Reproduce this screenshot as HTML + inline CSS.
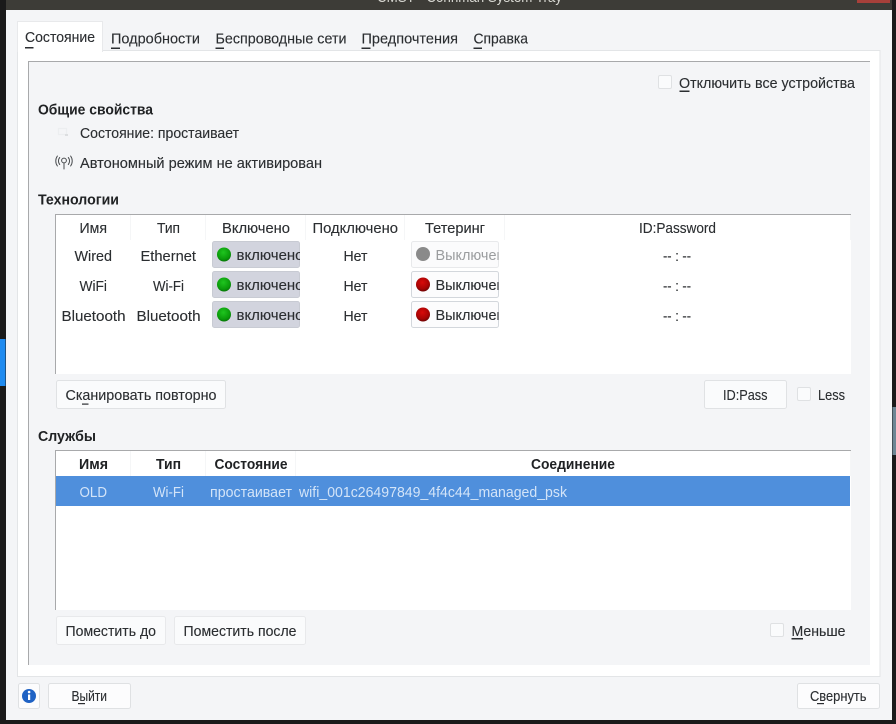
<!DOCTYPE html>
<html lang="ru"><head><meta charset="utf-8"><title>CMST</title>
<style>
html,body{margin:0;padding:0;width:896px;height:724px;overflow:hidden;background:#1c1c1c}
svg{display:block}
text{font-family:"Liberation Sans","DejaVu Sans",sans-serif;font-size:14.5px;fill:#2b2e31;stroke:#2b2e31;stroke-width:.12px}
.b{font-weight:bold;fill:#202224;stroke:none}
.w{fill:#d3e4f8;stroke:none}
.g{fill:#9a9c9e;stroke:none}
.t{fill:#d8d8d2;stroke:none}
</style></head><body>
<svg width="896" height="724" viewBox="0 0 896 724" xmlns="http://www.w3.org/2000/svg">
<defs>
<radialGradient id="gr" cx=".45" cy=".35" r=".7"><stop offset="0" stop-color="#1fc51f"/><stop offset=".7" stop-color="#0a9a0a"/><stop offset="1" stop-color="#056a05"/></radialGradient>
<radialGradient id="rd" cx=".45" cy=".35" r=".7"><stop offset="0" stop-color="#d80a0a"/><stop offset=".65" stop-color="#a80404"/><stop offset="1" stop-color="#600303"/></radialGradient>
<clipPath id="c1"><rect x="212" y="240" width="88" height="90"/></clipPath>
<clipPath id="c2"><rect x="411" y="240" width="87.5" height="90"/></clipPath>
</defs>

<rect width="896" height="724" fill="#1a1a1a"/>
<rect x="0" y="339" width="5.5" height="47" fill="#1f8bf0"/>
<rect x="892.5" y="407" width="3.5" height="48" fill="#6d8694"/>
<rect x="6" y="0" width="886" height="10" fill="#3d3c37"/>
<text class="t" x="377" y="2" textLength="185" lengthAdjust="spacingAndGlyphs">CMST - Connman System Tray</text>
<rect x="857" y="0" width="33" height="3" fill="#a8403a"/>
<rect x="6" y="10" width="886" height="710" fill="#f4f5f7"/>

<!-- tab pane -->
<rect x="17.5" y="50.5" width="862.5" height="626" fill="#fff" stroke="#e3e5e7"/>
<rect x="17.5" y="21.5" width="85" height="30" fill="#fff" stroke="#e8e9eb"/>
<rect x="18" y="49" width="84" height="3" fill="#fff"/>
<!-- inner panel -->
<rect x="28" y="61" width="842" height="604" fill="#f4f5f7"/>
<rect x="28" y="61" width="842" height="1" fill="#a8a9ab"/>
<rect x="28" y="61" width="1" height="604" fill="#a8a9ab"/>

<!-- tabs -->
<text x="25" y="42" textLength="70" lengthAdjust="spacingAndGlyphs">Состояние</text>
<rect x="25" y="47" width="8.5" height="1.5" fill="#2b2e31"/>
<text x="111" y="43.5" textLength="89" lengthAdjust="spacingAndGlyphs">Подробности</text>
<rect x="111" y="47.5" width="9" height="1.5" fill="#2b2e31"/>
<text x="215.5" y="43.5" textLength="131" lengthAdjust="spacingAndGlyphs">Беспроводные сети</text>
<rect x="215.5" y="47.5" width="8.5" height="1.5" fill="#2b2e31"/>
<text x="361.5" y="43.5" textLength="96.5" lengthAdjust="spacingAndGlyphs">Предпочтения</text>
<rect x="361.5" y="47.5" width="9" height="1.5" fill="#2b2e31"/>
<text x="473.5" y="43.5" textLength="54.5" lengthAdjust="spacingAndGlyphs">Справка</text>
<rect x="473.5" y="47.5" width="8.5" height="1.5" fill="#2b2e31"/>

<!-- top checkbox -->
<rect x="658.5" y="75.5" width="13" height="13" rx="1.5" fill="#fafbfc" stroke="#dfe1e3"/>
<text x="679" y="88" textLength="176" lengthAdjust="spacingAndGlyphs">Отключить все устройства</text>
<rect x="679.5" y="90.5" width="10" height="1.5" fill="#2b2e31"/>

<!-- general -->
<text class="b" x="38" y="114.5" textLength="115" lengthAdjust="spacingAndGlyphs">Общие свойства</text>
<g fill="none" stroke="#eceef0" stroke-width="1.2"><rect x="58.5" y="128.5" width="8" height="6"/></g>
<rect x="65" y="134" width="3" height="2" fill="#dcdee0"/>
<text x="80" y="138" textLength="159" lengthAdjust="spacingAndGlyphs">Состояние: простаивает</text>
<g fill="none" stroke="#4a4d50" stroke-width="1" stroke-linecap="round">
<circle cx="64" cy="160.5" r="2.4"/>
<path d="M64 163V169"/>
<path d="M59.7 157.5A5.5 5.5 0 0 0 59.7 164.5"/>
<path d="M68.3 157.5A5.5 5.5 0 0 1 68.3 164.5"/>
<path d="M57.4 156A8.5 8.5 0 0 0 57.4 166"/>
<path d="M70.6 156A8.5 8.5 0 0 1 70.6 166"/>
</g>
<text x="80" y="168" textLength="242" lengthAdjust="spacingAndGlyphs">Автономный режим не активирован</text>

<!-- technologies -->
<text class="b" x="38" y="204.5" textLength="81" lengthAdjust="spacingAndGlyphs">Технологии</text>
<rect x="55" y="214" width="796" height="160" fill="#fff"/>
<rect x="55" y="214" width="796" height="1" fill="#a8a9ab"/>
<rect x="55" y="214" width="1" height="160" fill="#a8a9ab"/>
<g fill="#f5f6f7"><rect x="130" y="215" width="1" height="25"/><rect x="205" y="215" width="1" height="25"/><rect x="305" y="215" width="1" height="25"/><rect x="404" y="215" width="1" height="25"/><rect x="504" y="215" width="1" height="25"/><rect x="850" y="215" width="1" height="25"/></g>
<text x="79.5" y="233" textLength="27.5" lengthAdjust="spacingAndGlyphs">Имя</text>
<text x="157" y="233" textLength="23" lengthAdjust="spacingAndGlyphs">Тип</text>
<text x="222" y="233" textLength="68" lengthAdjust="spacingAndGlyphs">Включено</text>
<text x="312.5" y="233" textLength="85.5" lengthAdjust="spacingAndGlyphs">Подключено</text>
<text x="425" y="233" textLength="60" lengthAdjust="spacingAndGlyphs">Тетеринг</text>
<text x="639" y="233" textLength="77" lengthAdjust="spacingAndGlyphs">ID:Password</text>

<text x="74.5" y="261" textLength="37.5" lengthAdjust="spacingAndGlyphs">Wired</text>
<text x="140.5" y="261" textLength="55.5" lengthAdjust="spacingAndGlyphs">Ethernet</text>
<text x="79.5" y="291" textLength="27.5" lengthAdjust="spacingAndGlyphs">WiFi</text>
<text x="153" y="291" textLength="31" lengthAdjust="spacingAndGlyphs">Wi-Fi</text>
<text x="61.5" y="321" textLength="64" lengthAdjust="spacingAndGlyphs">Bluetooth</text>
<text x="136.5" y="321" textLength="64" lengthAdjust="spacingAndGlyphs">Bluetooth</text>

<g fill="#d2d4de" stroke="#c8cbd3">
<rect x="212.5" y="241.5" width="87" height="26" rx="2"/>
<rect x="212.5" y="271.5" width="87" height="26" rx="2"/>
<rect x="212.5" y="301.5" width="87" height="26" rx="2"/>
</g>
<circle cx="224" cy="254.5" r="7" fill="url(#gr)"/>
<circle cx="224" cy="284.5" r="7" fill="url(#gr)"/>
<circle cx="224" cy="314.5" r="7" fill="url(#gr)"/>
<g clip-path="url(#c1)">
<text x="236.5" y="260" textLength="67" lengthAdjust="spacingAndGlyphs">включено</text>
<text x="236.5" y="290" textLength="67" lengthAdjust="spacingAndGlyphs">включено</text>
<text x="236.5" y="320" textLength="67" lengthAdjust="spacingAndGlyphs">включено</text>
</g>

<text x="343.5" y="261" textLength="24" lengthAdjust="spacingAndGlyphs">Нет</text>
<text x="343.5" y="291" textLength="24" lengthAdjust="spacingAndGlyphs">Нет</text>
<text x="343.5" y="321" textLength="24" lengthAdjust="spacingAndGlyphs">Нет</text>

<rect x="411.5" y="241.5" width="87" height="26" rx="2" fill="#fbfbfc" stroke="#e8e9eb"/>
<rect x="411.5" y="271.5" width="87" height="26" rx="2" fill="#fcfcfd" stroke="#d3d7dc"/>
<rect x="411.5" y="301.5" width="87" height="26" rx="2" fill="#fcfcfd" stroke="#d3d7dc"/>
<circle cx="423" cy="254" r="7" fill="#8a8a8a"/>
<circle cx="423" cy="284.5" r="7" fill="url(#rd)"/>
<circle cx="423" cy="314.5" r="7" fill="url(#rd)"/>
<g clip-path="url(#c2)">
<text class="g" x="435.5" y="260" textLength="77" lengthAdjust="spacingAndGlyphs">Выключено</text>
<text x="435.5" y="290" textLength="77" lengthAdjust="spacingAndGlyphs">Выключено</text>
<text x="435.5" y="320" textLength="77" lengthAdjust="spacingAndGlyphs">Выключено</text>
</g>

<text x="663" y="261" textLength="28" lengthAdjust="spacingAndGlyphs">-- : --</text>
<text x="663" y="291" textLength="28" lengthAdjust="spacingAndGlyphs">-- : --</text>
<text x="663" y="321" textLength="28" lengthAdjust="spacingAndGlyphs">-- : --</text>

<!-- tech buttons -->
<rect x="56.5" y="380.5" width="169" height="28" rx="2" fill="#fafbfc" stroke="#e0e2e4"/>
<text x="65.5" y="400" textLength="151" lengthAdjust="spacingAndGlyphs">Сканировать повторно</text>
<rect x="82" y="403.5" width="6.5" height="1.2" fill="#2b2e31"/>
<rect x="704.5" y="380.5" width="82" height="28" rx="2" fill="#fafbfc" stroke="#e0e2e4"/>
<text x="723" y="400" textLength="44.5" lengthAdjust="spacingAndGlyphs">ID:Pass</text>
<rect x="797.5" y="387.5" width="13" height="13" rx="1.5" fill="#fafbfc" stroke="#dfe1e3"/>
<text x="818" y="400" textLength="27" lengthAdjust="spacingAndGlyphs">Less</text>

<!-- services -->
<text class="b" x="38" y="441" textLength="58" lengthAdjust="spacingAndGlyphs">Службы</text>
<rect x="55" y="450" width="796" height="160" fill="#fff"/>
<rect x="55" y="450" width="796" height="1" fill="#a8a9ab"/>
<rect x="55" y="450" width="1" height="160" fill="#a8a9ab"/>
<g fill="#f5f6f7"><rect x="130" y="451" width="1" height="25"/><rect x="205" y="451" width="1" height="25"/><rect x="295" y="451" width="1" height="25"/><rect x="850" y="451" width="1" height="25"/></g>
<text class="b" x="79" y="469" textLength="29" lengthAdjust="spacingAndGlyphs">Имя</text>
<text class="b" x="156" y="469" textLength="25" lengthAdjust="spacingAndGlyphs">Тип</text>
<text class="b" x="214.5" y="469" textLength="73" lengthAdjust="spacingAndGlyphs">Состояние</text>
<text class="b" x="531" y="469" textLength="84" lengthAdjust="spacingAndGlyphs">Соединение</text>
<rect x="56" y="476" width="794" height="30" fill="#4f8fdc"/>
<text class="w" x="79.5" y="497" textLength="27.5" lengthAdjust="spacingAndGlyphs">OLD</text>
<text class="w" x="153" y="497" textLength="31" lengthAdjust="spacingAndGlyphs">Wi-Fi</text>
<text class="w" x="210" y="497" textLength="82" lengthAdjust="spacingAndGlyphs">простаивает</text>
<text class="w" x="299" y="497" textLength="268" lengthAdjust="spacingAndGlyphs">wifi_001c26497849_4f4c44_managed_psk</text>

<!-- service buttons -->
<rect x="56.5" y="616.5" width="109" height="28" rx="2" fill="#fafbfc" stroke="#e8e9eb"/>
<text x="65.5" y="636" textLength="90.5" lengthAdjust="spacingAndGlyphs">Поместить до</text>
<rect x="174.5" y="616.5" width="131" height="28" rx="2" fill="#fafbfc" stroke="#e8e9eb"/>
<text x="183.5" y="636" textLength="113" lengthAdjust="spacingAndGlyphs">Поместить после</text>
<rect x="770.5" y="623.5" width="13" height="13" rx="1.5" fill="#fafbfc" stroke="#dfe1e3"/>
<text x="791.5" y="636" textLength="54" lengthAdjust="spacingAndGlyphs">Меньше</text>
<rect x="791.5" y="638" width="11.5" height="1.5" fill="#2b2e31"/>

<!-- bottom -->
<rect x="18.5" y="683.5" width="21" height="25" rx="2" fill="#fcfcfd" stroke="#dfe1e3"/>
<circle cx="29" cy="696" r="7" fill="#1f62c4"/>
<rect x="28" y="694.5" width="2.2" height="5.5" fill="#fff"/>
<circle cx="29.1" cy="692" r="1.3" fill="#fff"/>
<rect x="48.5" y="683.5" width="82" height="25" rx="2" fill="#fcfcfd" stroke="#dfe1e3"/>
<text x="71.5" y="701" textLength="35.5" lengthAdjust="spacingAndGlyphs">Выйти</text>
<rect x="78" y="703" width="7" height="1.2" fill="#2b2e31"/>
<rect x="797.5" y="683.5" width="82" height="25" rx="2" fill="#fcfcfd" stroke="#dfe1e3"/>
<text x="810" y="701" textLength="56.5" lengthAdjust="spacingAndGlyphs">Свернуть</text>
<rect x="817" y="703" width="7" height="1.2" fill="#2b2e31"/>
</svg>
</body></html>
